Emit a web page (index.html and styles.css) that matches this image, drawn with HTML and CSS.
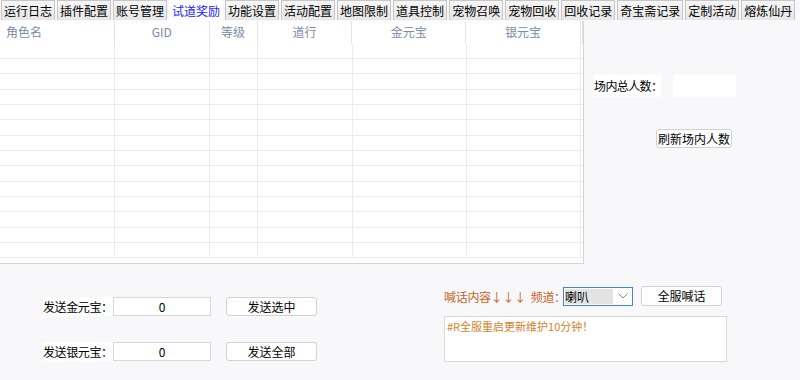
FILE: index.html
```html
<!DOCTYPE html>
<html lang="zh">
<head>
    <meta charset="UTF-8">
    <title>试道奖励</title>
    <link rel="stylesheet" href="styles.css">
</head>
<body>
    <div class="tabs">
        <div class="tab">运行日志</div>
        <div class="tab">插件配置</div>
        <div class="tab">账号管理</div>
        <div class="tab active">试道奖励</div>
        <div class="tab">功能设置</div>
        <div class="tab">活动配置</div>
        <div class="tab">地图限制</div>
        <div class="tab">道具控制</div>
        <div class="tab">宠物召唤</div>
        <div class="tab">宠物回收</div>
        <div class="tab">回收记录</div>
        <div class="tab">奇宝斋记录</div>
        <div class="tab">定制活动</div>
        <div class="tab">熔炼仙丹</div>
    </div>

    <div class="main">
        <div class="grid">
            <div class="grid-head">
                <div class="col c1 left">角色名</div>
                <div class="col c2">GID</div>
                <div class="col c3">等级</div>
                <div class="col c4">道行</div>
                <div class="col c5">金元宝</div>
                <div class="col c6">银元宝</div>
            </div>
            <div class="grid-body" id="rows"></div>
        </div>

        <div class="side">
            <div class="count-row">
                <span class="count-label">场内总人数：</span>
                <span class="count-box"></span>
            </div>
            <button class="btn refresh">刷新场内人数</button>
        </div>
    </div>

    <div class="bottom">
        <div class="send">
            <div class="send-row">
                <span class="send-label">发送金元宝：</span>
                <input class="num" type="text" value="0">
                <button class="btn send-btn">发送选中</button>
            </div>
            <div class="send-row">
                <span class="send-label">发送银元宝：</span>
                <input class="num" type="text" value="0">
                <button class="btn send-btn">发送全部</button>
            </div>
        </div>

        <div class="shout">
            <div class="shout-row">
                <span class="shout-label">喊话内容↓↓↓&nbsp; 频道：</span>
                <div class="select">
                    <span class="select-value">喇叭</span>
                    <svg width="10" height="6" viewBox="0 0 10 6"><path d="M0.5 0.5 L5 5 L9.5 0.5" fill="none" stroke="#888" stroke-width="1"/></svg>
                </div>
                <button class="btn shout-btn">全服喊话</button>
            </div>
            <textarea class="shout-text">#R全服重启更新维护10分钟！</textarea>
        </div>
    </div>

    <script>
        // 表格空行
        var rows = document.getElementById("rows");
        for (var i = 0; i < 14; i++) {
            var row = document.createElement("div");
            row.className = "grid-row";
            for (var j = 1; j <= 6; j++) {
                var cell = document.createElement("div");
                cell.className = "col c" + j;
                row.appendChild(cell);
            }
            rows.appendChild(row);
        }
    </script>
</body>
</html>
```

FILE: styles.css
```css
body {
    margin: 0;
    background: #f8f8fb;
    font-family: "Noto Sans CJK SC", "Liberation Sans", sans-serif;
    font-size: 12px;
    color: #000;
    width: 800px;
    height: 380px;
    overflow: hidden;
    white-space: nowrap;
}

.tabs {
    display: flex;
    gap: 2px;
    padding-left: 1px;
    height: 21px;
}

.tab {
    height: 20px;
    line-height: 20px;
    padding: 0 2px;
    border: 1px solid #c6c6c6;
    border-bottom: none;
    background: linear-gradient(#f6f6f6, #e6e6e6);
    box-sizing: border-box;
    flex-shrink: 0;
}

.tab.active {
    background: #fff;
    color: #1a1aff;
    border-color: #fff;
    height: 21px;
}

.main {
    display: flex;
    height: 243px;
}

.grid {
    width: 584px;
    height: 243px;
    flex-shrink: 0;
    background: #fff;
    border-right: 1px solid #d4d4d4;
    border-bottom: 1px solid #d4d4d4;
    box-sizing: border-box;
    overflow: hidden;
}

.grid-head {
    display: flex;
    height: 23px;
    line-height: 22px;
    color: #7b8ca3;
}

.grid-row {
    display: flex;
    height: 15.33px;
    border-bottom: 1px solid #ececec;
    box-sizing: border-box;
}

.grid-body .grid-row:first-child {
    height: 15px;
}

.col {
    border-right: 1px solid #ececec;
    box-sizing: border-box;
    text-align: center;
}

.grid-head .col {
    border-right-color: #e4e4e4;
    height: 23px;
}

.col.left {
    text-align: left;
    padding-left: 6px;
}

.c1 { width: 115px; }
.c2 { width: 95px; }
.c3 { width: 48px; }
.c4 { width: 95px; }
.c5 { width: 114px; }
.c6 { width: 114px; }

.grid-head .c6 {
    border-right: 3px double #e2e2e2;
    width: 117px;
}

.side {
    display: flex;
    flex-direction: column;
    align-items: flex-start;
    padding-left: 9px;
    padding-top: 54px;
}

.count-row {
    display: flex;
    align-items: center;
}

.count-label {
    background: #fff;
    width: 68px;
    height: 22px;
    line-height: 22px;
    padding-left: 1px;
    box-sizing: border-box;
    letter-spacing: -0.6px;
    flex-shrink: 0;
}

.count-box {
    background: #fff;
    width: 63px;
    height: 22px;
    margin-left: 12px;
}

.btn {
    font-family: "Noto Sans CJK SC", "Liberation Sans", sans-serif;
    font-size: 12px;
    color: #000;
    background: #fff;
    border: 1px solid #d2d2d2;
    border-radius: 3px;
    padding: 0;
    height: 19px;
    line-height: 16px;
    box-sizing: border-box;
    cursor: pointer;
    white-space: nowrap;
    flex-shrink: 0;
}

.refresh {
    width: 76px;
    margin-top: 32px;
    margin-left: 63px;
}

.bottom {
    display: flex;
}

.send {
    width: 444px;
    flex-shrink: 0;
    padding-left: 43px;
    padding-top: 33px;
    box-sizing: border-box;
}

.send-row {
    display: flex;
    align-items: center;
    height: 19px;
    margin-bottom: 26px;
}

.send-label {
    width: 70px;
    flex-shrink: 0;
    background: #fff;
    height: 19px;
    line-height: 19px;
    letter-spacing: -0.4px;
}

.num {
    width: 98px;
    height: 19px;
    flex-shrink: 0;
    border: 1px solid #d8d8d8;
    background: #fff;
    text-align: center;
    font-family: "Noto Sans CJK SC", "Liberation Sans", sans-serif;
    font-size: 12px;
    padding: 0;
    box-sizing: border-box;
}

.send-btn {
    width: 91px;
    margin-left: 15px;
}

.shout {
    padding-top: 22px;
}

.shout-row {
    display: flex;
    align-items: center;
    height: 20px;
}

.shout-label {
    color: #c8651b;
    width: 119px;
    flex-shrink: 0;
    letter-spacing: -0.3px;
}

.select {
    width: 70px;
    height: 19px;
    flex-shrink: 0;
    border: 1px solid #3f84d6;
    background: #fff;
    box-sizing: border-box;
    display: flex;
    align-items: center;
    padding: 0 4px 0 1px;
    justify-content: space-between;
}

.select-value {
    background: #e3e3e3;
    width: 48px;
    height: 15px;
    line-height: 15px;
}

.shout-btn {
    width: 81px;
    margin-left: 8px;
    height: 20px;
}

.shout-text {
    display: block;
    margin-top: 10px;
    width: 283px;
    height: 46px;
    border: 1px solid #d8d8d8;
    background: #fff;
    color: #d4832f;
    font-family: "Noto Sans CJK SC", "Liberation Sans", sans-serif;
    font-size: 11px;
    padding: 1px 2px;
    box-sizing: border-box;
    resize: none;
}
```
